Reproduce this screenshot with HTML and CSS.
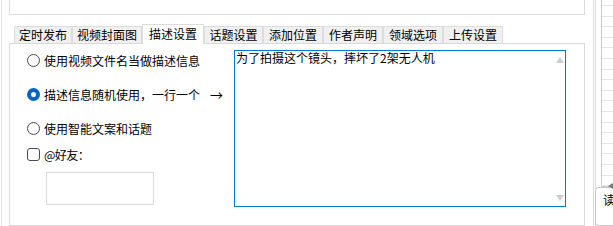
FILE: index.html
```html
<!DOCTYPE html>
<html lang="zh-CN">
<head>
<meta charset="utf-8">
<title>描述设置</title>
<link rel="stylesheet" href="styles.css">
</head>
<body>
<div class="page">
  <div class="main">
    <div class="topbox"></div>
    <div class="tabs">
      <div class="tab w58">定时发布</div>
      <div class="tab w70">视频封面图</div>
      <div class="tab active">描述设置</div>
      <div class="tab w59">话题设置</div>
      <div class="tab">添加位置</div>
      <div class="tab">作者声明</div>
      <div class="tab">领域选项</div>
      <div class="tab">上传设置</div>
    </div>
    <div class="panel">
      <div class="options">
        <div class="opt"><span class="radio"></span><span>使用视频文件名当做描述信息</span></div>
        <div class="opt"><span class="radio checked"></span><span>描述信息随机使用，一行一个</span><span class="arrow">→</span></div>
        <div class="opt"><span class="radio"></span><span>使用智能文案和话题</span></div>
        <div class="opt check-row"><span class="checkbox"></span><span class="at-label">@好友：</span></div>
        <div class="friends"></div>
      </div>
      <div class="textbox">
        <div class="textbox-text">为了拍摄这个镜头，摔坏了2架无人机</div>
        <span class="sb-up"></span>
        <span class="sb-down"></span>
      </div>
    </div>
  </div>
  <div class="side">
    <div class="side-inner">
      <div class="listbox"><span class="lb-left"></span></div>
      <div class="side-btn">读</div>
    </div>
  </div>
</div>
</body>
</html>
```
FILE: styles.css
```css
html, body {
  margin: 0;
  padding: 0;
  background: #ffffff;
}
body {
  font-family: "Noto Sans CJK SC", "Liberation Sans", sans-serif;
  font-size: 12px;
  color: #000;
}
.page {
  display: flex;
  height: 226px;
  overflow: hidden;
  padding-left: 1px;
}
.main {
  flex: none;
  width: 584px;
  box-sizing: border-box;
  border-left: 1px solid #e6e6e6;
  padding-left: 7px;
  display: flex;
  flex-direction: column;
}
.topbox {
  height: 15px;
  box-sizing: border-box;
  border: 1px solid #dadada;
  border-top: none;
}
.tabs {
  display: flex;
  align-items: flex-end;
  height: 19px;
  margin-top: 9px;
  padding-left: 5px;
  position: relative;
  z-index: 1;
}
.tab {
  width: 60px;
  height: 17px;
  box-sizing: border-box;
  border: 1px solid #dcdcdc;
  border-bottom: none;
  background: #f0f0f0;
  display: flex;
  align-items: center;
  justify-content: center;
  line-height: 14px;
  white-space: nowrap;
}
.tab.w58 { width: 58px; }
.tab.w70 { width: 70px; }
.tab.w59 { width: 59px; }
.tab.active {
  width: 62px;
  height: 20px;
  margin-bottom: -1px;
  background: #ffffff;
  padding-bottom: 1px;
}
.panel {
  flex: 1;
  border: 1px solid #d9d9d9;
  display: flex;
  align-items: flex-start;
}
.options {
  flex: none;
  width: 224px;
  box-sizing: border-box;
  padding-left: 17px;
  padding-top: 6px;
  display: flex;
  flex-direction: column;
}
.opt {
  display: flex;
  align-items: center;
  height: 20px;
  gap: 4px;
  margin-bottom: 14px;
  white-space: nowrap;
}
.opt.check-row {
  margin-top: -8px;
  margin-bottom: 0;
}
.at-label {
  letter-spacing: -0.5px;
}
.radio {
  flex: none;
  width: 13px;
  height: 13px;
  box-sizing: border-box;
  border: 1px solid #4a4a4a;
  border-radius: 50%;
  background: #fff;
}
.radio.checked {
  border: 4px solid #0067c0;
  background: #ffffff;
}
.checkbox {
  flex: none;
  width: 13px;
  height: 13px;
  box-sizing: border-box;
  border: 1px solid #4a4a4a;
  border-radius: 3px;
  background: #fff;
}
.arrow {
  margin-left: 6px;
  font-family: "Noto Sans CJK SC", sans-serif;
  font-size: 13px;
}
.friends {
  margin-top: 8px;
  margin-left: 19px;
  width: 108px;
  height: 33px;
  box-sizing: border-box;
  border: 1px solid #d9d9d9;
}
.textbox {
  flex: none;
  position: relative;
  margin-top: 6px;
  width: 332px;
  height: 157px;
  box-sizing: border-box;
  border: 1px solid #0078d7;
  padding: 0 1px;
}
.textbox-text {
  line-height: 14px;
  font-size: 12px;
}
.sb-up {
  position: absolute;
  right: 1px;
  top: 6px;
  width: 0;
  height: 0;
  border-left: 4px solid transparent;
  border-right: 4px solid transparent;
  border-bottom: 6px solid #cdcdcd;
}
.sb-down {
  position: absolute;
  right: 1px;
  bottom: 5px;
  width: 0;
  height: 0;
  border-left: 4px solid transparent;
  border-right: 4px solid transparent;
  border-top: 6px solid #cdcdcd;
}
.side {
  flex: 1;
  margin-left: 8px;
  border-left: 1px solid #dcdcdc;
  padding-left: 1px;
  display: flex;
}
.side-inner {
  flex: 1;
  border-left: 1px solid #dcdcdc;
  display: flex;
  flex-direction: column;
}
.listbox {
  position: relative;
  margin-left: 5px;
  height: 194px;
  box-sizing: border-box;
  border-left: 1px solid #cfcfcf;
  border-bottom: 1px solid #cfcfcf;
  background: repeating-linear-gradient(to bottom, transparent 0, transparent 5px, #e6e6e6 5px, #e6e6e6 6px, transparent 6px, transparent 10.6px);
}
.lb-left {
  position: absolute;
  left: 6px;
  top: 183px;
  width: 0;
  height: 0;
  border-top: 3px solid transparent;
  border-bottom: 3px solid transparent;
  border-right: 5px solid #7a7a7a;
}
.side-btn {
  margin-left: -1px;
  height: 40px;
  box-sizing: border-box;
  border: 1px solid #c8c8c8;
  border-right: none;
  border-radius: 4px 0 0 4px;
  padding: 5px 0 0 7px;
  line-height: 14px;
}
```
